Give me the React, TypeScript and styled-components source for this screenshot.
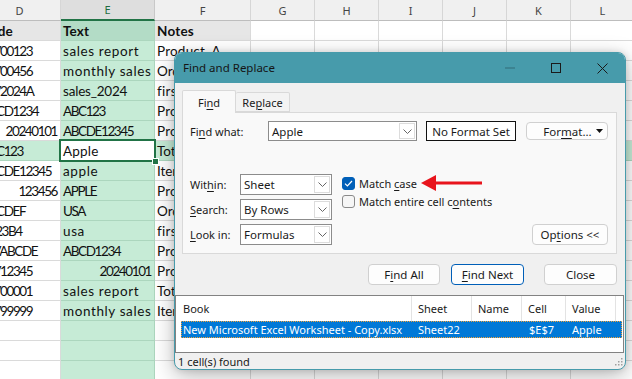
import React from "react";
import styled, { createGlobalStyle } from "styled-components";

const UI_FONT = `"Noto Sans", "Open Sans", "Liberation Sans", sans-serif`;
const CELL_FONT = `Lato, "Liberation Sans", sans-serif`;

const GlobalStyle = createGlobalStyle`
  html, body { margin: 0; padding: 0; background: #fff; }
  body { width: 632px; height: 379px; overflow: hidden; }
`;

// column widths D..L, D starts off-screen on the left
const COLS = [82, 94, 96, 64, 64, 64, 64, 64, 64];
const LETTERS = ["D", "E", "F", "G", "H", "I", "J", "K", "L"];
const ACTIVE_COL = 1;
const ACTIVE_ROW = 6;

type Val = string | number;

const rows: Val[][] = [
  ["Code", "Text", "Notes"],
  ["INV00123", "sales report", "Product_A"],
  ["INV00456", "monthly sales", "Order_B"],
  ["INV2024A", "sales_2024", "first_C"],
  ["ABCD1234", "ABC123", "Product_D"],
  [20240101, "ABCDE12345", "Product_E"],
  ["ABC123", "Apple", "Total_F"],
  ["ABCDE12345", "apple", "Item_G"],
  [123456, "APPLE", "Product_H"],
  ["ABCDEF", "USA", "Order_I"],
  ["A123B4", "usa", "first_J"],
  ["INVABCDE", "ABCD1234", "Product_K"],
  ["INV12345", 20240101, "Product_L"],
  ["INV00001", "sales report", "Total_M"],
  ["INV99999", "monthly sales", "Item_N"],
  [],
  [],
  [],
];

const GREEN = "#c6ebd6";
const GREEN_LINE = "#acd6be";

// Calibri has narrow capitals and digits next to roomy lowercase; nudge tracking to match
const tracking = (v: Val | undefined) => {
  const s = v === undefined ? "" : String(v);
  if (!s) return 0;
  const caps = s.replace(/[^A-Z0-9]/g, "").length / s.length;
  return Math.round((0.6 - 2.0 * caps) * 10) / 10;
};

const Screen = styled.div`
  position: relative;
  width: 632px;
  height: 379px;
  overflow: hidden;
`;

const Sheet = styled.div`
  display: grid;
  grid-template-columns: ${COLS.map((c) => c + "px").join(" ")};
  grid-template-rows: 21px;
  grid-auto-rows: 20px;
  margin-left: -21px;
  width: max-content;
`;

const ColHead = styled.div<{ $active?: boolean }>`
  display: flex;
  align-items: center;
  justify-content: center;
  box-sizing: border-box;
  background: ${(p) => (p.$active ? "#dedede" : "#f0f0f0")};
  color: ${(p) => (p.$active ? "#1d6b40" : "#444")};
  border-right: 1px solid ${(p) => (p.$active ? "#c8c8c8" : "#d6d6d6")};
  border-bottom: ${(p) => (p.$active ? "2px solid #217346" : "1px solid #bdbdbd")};
  font: 11px ${UI_FONT};
`;

const Cell = styled.div<{
  $bg: string;
  $line: string;
  $right?: boolean;
  $bold?: boolean;
  $ls: number;
}>`
  position: relative;
  box-sizing: border-box;
  background: ${(p) => p.$bg};
  border-right: 1px solid ${(p) => p.$line};
  border-bottom: 1px solid ${(p) => p.$line};
  padding: 1px 3px 0 2px;
  font: ${(p) => (p.$bold ? 700 : 400)} 13.5px ${CELL_FONT};
  letter-spacing: ${(p) => p.$ls}px;
  line-height: 19px;
  color: #111;
  text-align: ${(p) => (p.$right ? "right" : "left")};
  white-space: nowrap;
  overflow: hidden;
`;

const ActiveCell = styled(Cell)`
  overflow: visible;
  z-index: 1;
  &::after {
    content: "";
    position: absolute;
    left: -2px;
    top: -2px;
    right: -2px;
    bottom: -2px;
    border: 2px solid #217346;
  }
`;

const FillHandle = styled.span`
  position: absolute;
  right: -5px;
  bottom: -5px;
  width: 5px;
  height: 5px;
  background: #217346;
  border: 1px solid #fff;
  z-index: 2;
`;

/* ---------- dialog ---------- */

const Dialog = styled.div`
  position: absolute;
  left: 174px;
  top: 52px;
  width: 452px;
  height: 318px;
  box-sizing: border-box;
  border: 1px solid #479bab;
  border-radius: 8px;
  background: #f0f0f0;
  box-shadow: 0 6px 22px rgba(0, 0, 0, 0.28), 0 0 6px rgba(0, 0, 0, 0.12);
  overflow: hidden;
  display: flex;
  flex-direction: column;
  font: 11px ${UI_FONT};
  color: #1a1a1a;
`;

const TitleBar = styled.div`
  height: 30px;
  flex: none;
  display: flex;
  align-items: center;
  background: #479bab;
  padding-left: 8px;
`;

const Title = styled.span`
  flex: 1;
  font-size: 11.5px;
  color: #151515;
  margin-top: -1px;
`;

const WinButton = styled.span<{ $dim?: boolean }>`
  width: 46px;
  height: 30px;
  display: flex;
  align-items: center;
  justify-content: center;
  color: ${(p) => (p.$dim ? "rgba(0,0,0,0.3)" : "#1a1a1a")};
`;

const Body = styled.div`
  padding: 7px 8px 0 7px;
`;

const Tabs = styled.div`
  display: flex;
  align-items: flex-end;
  height: 22px;
`;

const Tab = styled.div<{ $active?: boolean }>`
  width: 54px;
  height: ${(p) => (p.$active ? 23 : 20)}px;
  box-sizing: border-box;
  display: flex;
  align-items: center;
  justify-content: center;
  padding-top: ${(p) => (p.$active ? 0 : 1)}px;
  background: ${(p) => (p.$active ? "#f9f9f9" : "#f3f3f3")};
  border: 1px solid #d9d9d9;
  border-bottom: ${(p) => (p.$active ? "none" : "1px solid #d9d9d9")};
  border-left: ${(p) => (p.$active ? "1px solid #d9d9d9" : "none")};
  border-radius: 2px 2px 0 0;
  margin-bottom: ${(p) => (p.$active ? -1 : 0)}px;
  position: relative;
  z-index: ${(p) => (p.$active ? 1 : 0)};
`;

const Panel = styled.div`
  height: 142px;
  box-sizing: border-box;
  border: 1px solid #d9d9d9;
  background: #f9f9f9;
  padding: 8px 8px 0 7px;
  display: flex;
  flex-direction: column;
`;

const FindRow = styled.div`
  display: flex;
  align-items: center;
  height: 20px;
`;

const Label = styled.span<{ $w: number }>`
  width: ${(p) => p.$w}px;
  flex: none;
`;

const Acc = styled.span`
  text-decoration: underline;
  text-underline-offset: 2px;
`;

const Combo = styled.div<{ $w: number; $h: number }>`
  width: ${(p) => p.$w}px;
  height: ${(p) => p.$h}px;
  box-sizing: border-box;
  flex: none;
  border: 1px solid #8c8c8c;
  background: #fff;
  display: flex;
  align-items: stretch;
`;

const ComboText = styled.span`
  flex: 1;
  display: flex;
  align-items: center;
  padding-left: 3px;
  font-size: 11.5px;
`;

const DropBtn = styled.span`
  width: 16px;
  margin: 1px;
  box-sizing: border-box;
  border: 1px solid #dcdcdc;
  display: flex;
  align-items: center;
  justify-content: center;
`;

const FormatBox = styled.div`
  width: 91px;
  height: 20px;
  box-sizing: border-box;
  margin-left: 9px;
  border: 1px solid #111;
  background: #fff;
  display: flex;
  align-items: center;
  justify-content: center;
  font-size: 11.5px;
`;

const Button = styled.div<{ $w: number; $h?: number; $default?: boolean }>`
  width: ${(p) => p.$w}px;
  height: ${(p) => p.$h ?? 21}px;
  box-sizing: border-box;
  flex: none;
  display: flex;
  align-items: center;
  justify-content: center;
  background: #fdfdfd;
  border: 1px solid ${(p) => (p.$default ? "#005fb8" : "#d0d0d0")};
  border-radius: 4px;
  font-size: 11.5px;
`;

const FormatButton = styled(Button)`
  margin-left: 10px;
  padding: 0 4px 0 12px;
`;

const ButtonText = styled.span`
  flex: 1;
  text-align: center;
`;

const Options = styled.div`
  display: flex;
  margin-top: 33px;
`;

const Fields = styled.div`
  display: flex;
  flex-direction: column;
  gap: 4px;
`;

const FieldRow = styled.div`
  display: flex;
  align-items: center;
`;

const Checks = styled.div`
  display: flex;
  flex-direction: column;
  margin-left: 10px;
`;

const CheckRow = styled.div`
  display: flex;
  align-items: center;
  height: 18px;
  gap: 4px;
`;

const Box = styled.span<{ $on?: boolean }>`
  width: 13px;
  height: 13px;
  box-sizing: border-box;
  border-radius: 3px;
  display: flex;
  align-items: center;
  justify-content: center;
  background: ${(p) => (p.$on ? "#005fb8" : "#f6f6f6")};
  border: 1px solid ${(p) => (p.$on ? "#005fb8" : "#8a8a8a")};
`;

const Arrow = styled.svg`
  margin-left: 0;
`;

const OptionsButton = styled(Button)`
  margin-left: auto;
  align-self: flex-end;
`;

const ButtonRow = styled.div`
  display: flex;
  justify-content: flex-end;
  gap: 11px;
  margin-top: 10px;
  & > :last-child {
    margin-left: 9px;
  }
`;

const Results = styled.div`
  margin-top: 10px;
  height: 58px;
  box-sizing: border-box;
  border: 1px solid #828282;
  background: #fff;
  padding-left: 5px;
  margin-right: 1px;
`;

const ResultGrid = styled.div<{ $selected?: boolean; $h: number }>`
  display: grid;
  grid-template-columns: 231px 60px 50px 44px 50px 1fr;
  height: ${(p) => p.$h}px;
  box-sizing: border-box;
  margin-right: 1px;
  background: ${(p) => (p.$selected ? "#0078d7" : "transparent")};
  color: ${(p) => (p.$selected ? "#fff" : "#1a1a1a")};
  outline: ${(p) => (p.$selected ? "1px dotted #f2a23a" : "none")};
  outline-offset: -1px;
`;

const ResultCell = styled.span<{ $sep?: boolean; $pad?: number }>`
  display: flex;
  align-items: center;
  padding-left: ${(p) => p.$pad ?? (p.$sep ? 6 : 2)}px;
  border-right: ${(p) => (p.$sep ? "1px solid #e3e3e3" : "none")};
  white-space: nowrap;
  overflow: hidden;
  font-size: 11px;
`;

const StatusBar = styled.div`
  flex: 1;
  display: flex;
  align-items: center;
  justify-content: space-between;
  padding: 0 2px 0 3px;
`;

const Chevron = () => (
  <svg width="9" height="5" viewBox="0 0 9 5">
    <path d="M0.5 0.5 L4.5 4.5 L8.5 0.5" fill="none" stroke="#666" strokeWidth="1" />
  </svg>
);

const SelectBox = ({ w, h, value }: { w: number; h: number; value: string }) => (
  <Combo $w={w} $h={h}>
    <ComboText>{value}</ComboText>
    <DropBtn>
      <Chevron />
    </DropBtn>
  </Combo>
);

const cellBg = (r: number, c: number) => {
  if (r === 0) {
    if (c === ACTIVE_COL) return "#b3dcc6";
    return c < 3 ? "#e6e6e6" : "#fff";
  }
  if (r === ACTIVE_ROW) return c === ACTIVE_COL ? "#fff" : GREEN;
  return c === ACTIVE_COL ? GREEN : "#fff";
};

const cellLine = (r: number, c: number) =>
  c === ACTIVE_COL || r === ACTIVE_ROW ? GREEN_LINE : "#dadada";

const App = () => {
  return (
    <Screen>
      <GlobalStyle />
      <Sheet>
        {LETTERS.map((l, i) => (
          <ColHead key={l} $active={i === ACTIVE_COL}>
            {l}
          </ColHead>
        ))}
        {rows.map((row, r) =>
          COLS.map((_, c) => {
            const v = row[c];
            const props = {
              $bg: cellBg(r, c),
              $line: cellLine(r, c),
              $right: typeof v === "number",
              $bold: r === 0,
              $ls: tracking(v),
            };
            if (r === ACTIVE_ROW && c === ACTIVE_COL) {
              return (
                <ActiveCell key={`${r}-${c}`} {...props}>
                  {v}
                  <FillHandle />
                </ActiveCell>
              );
            }
            return (
              <Cell key={`${r}-${c}`} {...props}>
                {v ?? ""}
              </Cell>
            );
          })
        )}
      </Sheet>

      <Dialog>
        <TitleBar>
          <Title>Find and Replace</Title>
          <WinButton $dim>
            <svg width="10" height="2" viewBox="0 0 10 2">
              <path d="M0 1 H10" stroke="currentColor" strokeWidth="1" />
            </svg>
          </WinButton>
          <WinButton>
            <svg width="10" height="10" viewBox="0 0 10 10">
              <rect x="0.5" y="0.5" width="9" height="9" fill="none" stroke="currentColor" strokeWidth="1" />
            </svg>
          </WinButton>
          <WinButton>
            <svg width="11" height="11" viewBox="0 0 11 11">
              <path d="M0.5 0.5 L10.5 10.5 M10.5 0.5 L0.5 10.5" stroke="currentColor" strokeWidth="1" />
            </svg>
          </WinButton>
        </TitleBar>

        <Body>
          <Tabs>
            <Tab $active>
              Fi<Acc>n</Acc>d
            </Tab>
            <Tab>
              Re<Acc>p</Acc>lace
            </Tab>
          </Tabs>
          <Panel>
            <FindRow>
              <Label $w={78}>
                Fi<Acc>n</Acc>d what:
              </Label>
              <SelectBox w={149} h={20} value="Apple" />
              <FormatBox>No Format Set</FormatBox>
              <FormatButton $w={82} $h={18}>
                <ButtonText>
                  For<Acc>m</Acc>at...
                </ButtonText>
                <svg width="7" height="4" viewBox="0 0 7 4">
                  <path d="M0 0 H7 L3.5 4 Z" fill="#111" />
                </svg>
              </FormatButton>
            </FindRow>

            <Options>
              <Fields>
                <FieldRow>
                  <Label $w={50}>
                    Wit<Acc>h</Acc>in:
                  </Label>
                  <SelectBox w={92} h={21} value="Sheet" />
                </FieldRow>
                <FieldRow>
                  <Label $w={50}>
                    <Acc>S</Acc>earch:
                  </Label>
                  <SelectBox w={92} h={21} value="By Rows" />
                </FieldRow>
                <FieldRow>
                  <Label $w={50}>
                    <Acc>L</Acc>ook in:
                  </Label>
                  <SelectBox w={92} h={21} value="Formulas" />
                </FieldRow>
              </Fields>
              <Checks>
                <CheckRow>
                  <Box $on>
                    <svg width="9" height="7" viewBox="0 0 9 7">
                      <path d="M1 3.6 L3.4 6 L8 1" fill="none" stroke="#fff" strokeWidth="1.2" />
                    </svg>
                  </Box>
                  <span>
                    Match <Acc>c</Acc>ase
                  </span>
                  <Arrow width="62" height="18" viewBox="0 0 62 18">
                    <path d="M0 9 L15 1 L15 17 Z" fill="#e8141c" />
                    <rect x="13" y="7.5" width="48" height="3" fill="#e8141c" />
                  </Arrow>
                </CheckRow>
                <CheckRow>
                  <Box />
                  <span>
                    Match entire cell c<Acc>o</Acc>ntents
                  </span>
                </CheckRow>
              </Checks>
              <OptionsButton $w={76}>
                Op<Acc>t</Acc>ions &lt;&lt;
              </OptionsButton>
            </Options>
          </Panel>

          <ButtonRow>
            <Button $w={72}>
              F<Acc>i</Acc>nd All
            </Button>
            <Button $w={73} $default>
              <Acc>F</Acc>ind Next
            </Button>
            <Button $w={73}>Close</Button>
          </ButtonRow>
        </Body>

        <Results>
          <ResultGrid $h={25}>
            <ResultCell $sep $pad={2}>
              Book
            </ResultCell>
            <ResultCell $sep>Sheet</ResultCell>
            <ResultCell $sep>Name</ResultCell>
            <ResultCell $sep>Cell</ResultCell>
            <ResultCell $sep>Value</ResultCell>
            <ResultCell />
          </ResultGrid>
          <ResultGrid $h={17} $selected>
            <ResultCell>New Microsoft Excel Worksheet - Copy.xlsx</ResultCell>
            <ResultCell $pad={6}>Sheet22</ResultCell>
            <ResultCell />
            <ResultCell $pad={7}>$E$7</ResultCell>
            <ResultCell $pad={6}>Apple</ResultCell>
            <ResultCell />
          </ResultGrid>
        </Results>

        <StatusBar>
          <span>1 cell(s) found</span>
          <svg width="9" height="9" viewBox="0 0 9 9">
            {[
              [7, 1],
              [7, 4],
              [4, 4],
              [7, 7],
              [4, 7],
              [1, 7],
            ].map(([x, y]) => (
              <rect key={`${x}${y}`} x={x} y={y} width="1.5" height="1.5" fill="#a0a0a0" />
            ))}
          </svg>
        </StatusBar>
      </Dialog>
    </Screen>
  );
};

export default App;
